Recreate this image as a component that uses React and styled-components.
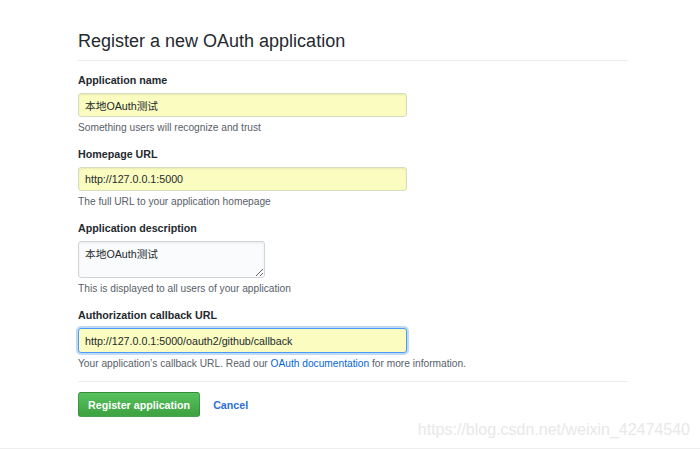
import React from "react";
import styled, { createGlobalStyle } from "styled-components";

const GlobalStyle = createGlobalStyle`
  body {
    margin: 0;
    background: #ffffff;
    font-family: "Liberation Sans", "Noto Sans CJK SC", sans-serif;
    color: #24292e;
  }
`;

const Page = styled.div`
  position: relative;
  width: 700px;
  height: 449px;
  box-sizing: border-box;
  border-bottom: 1px solid #eeeeee;
  overflow: hidden;
`;

const Container = styled.div`
  width: 550px;
  margin-left: 78px;
  padding-top: 30px;
`;

const Header = styled.div`
  padding-bottom: 8px;
  border-bottom: 1px solid #eaecef;
  margin-bottom: 12px;
`;

const Title = styled.h2`
  margin: 0;
  font-size: 18px;
  line-height: 22px;
  font-weight: 400;
  color: #24292e;
`;

const Group = styled.div`
  display: flex;
  flex-direction: column;
  align-items: flex-start;
  margin-bottom: ${(p) => (p.last ? "10px" : "12px")};
`;

const Label = styled.label`
  font-size: 10.7px;
  line-height: 15px;
  font-weight: 700;
  color: #24292e;
  margin-bottom: 5px;
`;

const Input = styled.input`
  box-sizing: border-box;
  width: 329px;
  height: ${(p) => (p.focused ? "25px" : "24px")};
  padding: 0 6px;
  font-family: "Liberation Sans", "Noto Sans CJK SC", sans-serif;
  font-size: 10.7px;
  color: #24292e;
  background: #fafcc0;
  border: 1px solid ${(p) => (p.focused ? "#4a9bf8" : "#d8dcc0")};
  border-radius: 3px;
  box-shadow: ${(p) =>
    p.focused
      ? "0 0 0 2px rgba(3, 102, 214, 0.25)"
      : "inset 0 1px 2px rgba(27, 31, 35, 0.075)"};
  outline: none;
`;

const TextArea = styled.textarea`
  box-sizing: border-box;
  width: 187px;
  height: 37px;
  padding: 5px 6px;
  font-family: "Liberation Sans", "Noto Sans CJK SC", sans-serif;
  font-size: 10.7px;
  line-height: 15px;
  color: #24292e;
  background: #fafbfc;
  border: 1px solid #d1d5da;
  border-radius: 3px;
  box-shadow: inset 0 1px 2px rgba(27, 31, 35, 0.075);
  outline: none;
`;

const Note = styled.p`
  margin: 4px 0 0;
  font-size: 10.2px;
  line-height: 14px;
  color: #586069;
`;

const Link = styled.a`
  color: #0366d6;
  text-decoration: none;
`;

const Divider = styled.hr`
  height: 0;
  margin: 0 0 10px;
  border: 0;
  border-top: 1px solid #eaecef;
`;

const Actions = styled.div`
  display: flex;
  align-items: center;
  gap: 13px;
`;

const Button = styled.button`
  box-sizing: border-box;
  height: 25px;
  padding: 0 9px;
  font-family: "Liberation Sans", sans-serif;
  font-size: 10.7px;
  font-weight: 700;
  color: #ffffff;
  background-image: linear-gradient(-180deg, #56c25e 0%, #3fa442 90%);
  border: 1px solid rgba(27, 31, 35, 0.2);
  border-radius: 3px;
`;

const CancelLink = styled.a`
  font-size: 10.7px;
  font-weight: 700;
  color: #2a6fd6;
  text-decoration: none;
`;

const Watermark = styled.div`
  position: absolute;
  right: 10px;
  top: 421px;
  font-family: "Liberation Sans", sans-serif;
  font-size: 16px;
  color: #e8e8e8;
  pointer-events: none;
`;

const Field = ({ label, note, last, children }) => (
  <Group last={last}>
    <Label>{label}</Label>
    {children}
    <Note>{note}</Note>
  </Group>
);

export default function App() {
  return (
    <Page>
      <GlobalStyle />
      <Container>
        <Header>
          <Title>Register a new OAuth application</Title>
        </Header>
        <Field label="Application name" note="Something users will recognize and trust">
          <Input defaultValue="本地OAuth测试" />
        </Field>
        <Field label="Homepage URL" note="The full URL to your application homepage">
          <Input defaultValue="http://127.0.0.1:5000" />
        </Field>
        <Field
          label="Application description"
          note="This is displayed to all users of your application"
        >
          <TextArea defaultValue="本地OAuth测试" />
        </Field>
        <Field
          last
          label="Authorization callback URL"
          note={
            <>
              Your application’s callback URL. Read our{" "}
              <Link href="#">OAuth documentation</Link> for more information.
            </>
          }
        >
          <Input focused defaultValue="http://127.0.0.1:5000/oauth2/github/callback" />
        </Field>
        <Divider />
        <Actions>
          <Button>Register application</Button>
          <CancelLink href="#">Cancel</CancelLink>
        </Actions>
      </Container>
      <Watermark>https://blog.csdn.net/weixin_42474540</Watermark>
    </Page>
  );
}
